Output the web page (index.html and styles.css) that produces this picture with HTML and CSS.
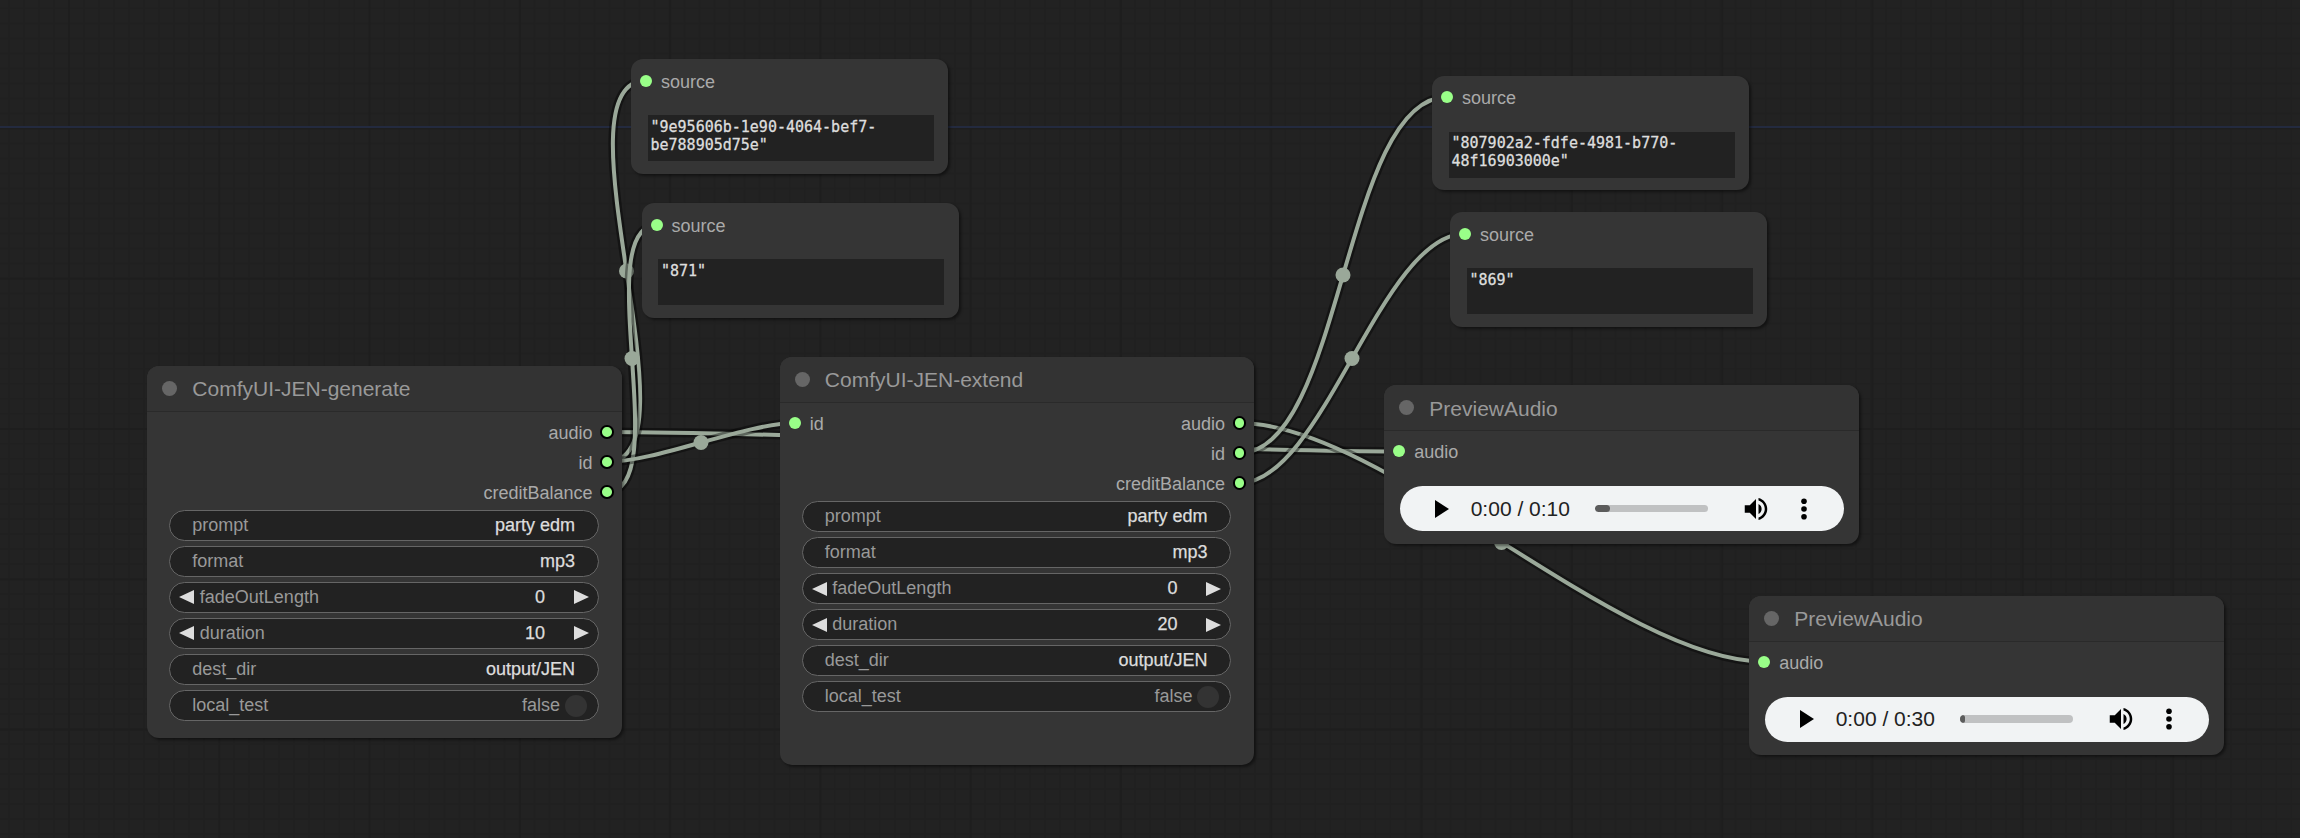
FILE: index.html
```
<!DOCTYPE html>
<html lang="en">
<head>
<meta charset="utf-8">
<title>ComfyUI</title>
<link rel="stylesheet" href="styles.css">
</head>
<body>
<main class="canvas">
  <svg class="links" width="2300" height="838" viewBox="0 0 2300 838">
    <defs>
      <g id="volume"><path d="M3 9v6h4l5 5V4L7 9H3zm13.5 3A4.5 4.5 0 0 0 14 7.97v8.05c1.48-.73 2.5-2.25 2.5-4.02zM14 3.23v2.06c2.89.86 5 3.54 5 6.71s-2.11 5.85-5 6.71v2.06c4.01-.91 7-4.49 7-8.77s-2.99-7.86-7-8.77z"/></g>
    </defs>
    <g class="link"><path d="M607 432C805 432 1201 451.500 1399 451.500"/><path d="M607 432C805 432 1201 451.500 1399 451.500"/><circle cx="1003" cy="442" r="7.500"/></g>
    <g class="link"><path d="M607 462C703 462 550 80.500 646 80.500"/><path d="M607 462C703 462 550 80.500 646 80.500"/><circle cx="626.500" cy="271" r="7.500"/></g>
    <g class="link"><path d="M607 492C675 492 589 225 657 225"/><path d="M607 492C675 492 589 225 657 225"/><circle cx="632" cy="358.500" r="7.500"/></g>
    <g class="link"><path d="M607 462C655 462 747 423 795 423"/><path d="M607 462C655 462 747 423 795 423"/><circle cx="701" cy="442.500" r="7.500"/></g>
    <g class="link"><path d="M1239.500 423C1384 423 1619 661.500 1764 661.500"/><path d="M1239.500 423C1384 423 1619 661.500 1764 661.500"/><circle cx="1501.500" cy="542.500" r="7.500"/></g>
    <g class="link"><path d="M1239.500 453C1343 453 1343 97 1447 97"/><path d="M1239.500 453C1343 453 1343 97 1447 97"/><circle cx="1343" cy="275" r="7.500"/></g>
    <g class="link"><path d="M1239.500 483C1323 483 1381 233.700 1465 233.700"/><path d="M1239.500 483C1323 483 1381 233.700 1465 233.700"/><circle cx="1352" cy="358.500" r="7.500"/></g>
  </svg>

  <section class="node compact" style="left:631px;top:59px">
    <div class="slot in"><i class="port"></i>source</div>
    <div class="value">"9e95606b-1e90-4064-bef7-<br>be788905d75e"</div>
  </section>
  <section class="node compact" style="left:641.500px;top:203.300px">
    <div class="slot in"><i class="port"></i>source</div>
    <div class="value">"871"</div>
  </section>
  <section class="node compact" style="left:1432px;top:75.500px">
    <div class="slot in"><i class="port"></i>source</div>
    <div class="value">"807902a2-fdfe-4981-b770-<br>48f16903000e"</div>
  </section>
  <section class="node compact" style="left:1450px;top:212.300px">
    <div class="slot in"><i class="port"></i>source</div>
    <div class="value">"869"</div>
  </section>

  <section class="node wide" style="left:147.300px;top:365.700px;height:372.300px">
    <header class="title"><i class="dot"></i><span>ComfyUI-JEN-generate</span></header>
    <div class="slots">
      <div></div>
      <div class="outs">
        <div class="slot out">audio<i class="port"></i></div>
        <div class="slot out">id<i class="port"></i></div>
        <div class="slot out">creditBalance<i class="port"></i></div>
      </div>
    </div>
    <div class="widgets">
      <div class="widget"><span>prompt</span><b>party edm</b></div>
      <div class="widget"><span>format</span><b>mp3</b></div>
      <div class="widget num"><i class="arrow prev"></i><span>fadeOutLength</span><b>0</b><i class="arrow next"></i></div>
      <div class="widget num"><i class="arrow prev"></i><span>duration</span><b>10</b><i class="arrow next"></i></div>
      <div class="widget"><span>dest_dir</span><b>output/JEN</b></div>
      <div class="widget toggle"><span>local_test</span><span class="state">false</span><i class="knob"></i></div>
    </div>
  </section>

  <section class="node wide" style="left:779.800px;top:356.800px;height:408.500px">
    <header class="title"><i class="dot"></i><span>ComfyUI-JEN-extend</span></header>
    <div class="slots">
      <div class="slot in"><i class="port"></i>id</div>
      <div class="outs">
        <div class="slot out">audio<i class="port"></i></div>
        <div class="slot out">id<i class="port"></i></div>
        <div class="slot out">creditBalance<i class="port"></i></div>
      </div>
    </div>
    <div class="widgets">
      <div class="widget"><span>prompt</span><b>party edm</b></div>
      <div class="widget"><span>format</span><b>mp3</b></div>
      <div class="widget num"><i class="arrow prev"></i><span>fadeOutLength</span><b>0</b><i class="arrow next"></i></div>
      <div class="widget num"><i class="arrow prev"></i><span>duration</span><b>20</b><i class="arrow next"></i></div>
      <div class="widget"><span>dest_dir</span><b>output/JEN</b></div>
      <div class="widget toggle"><span>local_test</span><span class="state">false</span><i class="knob"></i></div>
    </div>
  </section>

  <section class="node wide preview" style="left:1384.300px;top:385.200px">
    <header class="title"><i class="dot"></i><span>PreviewAudio</span></header>
    <div class="slot in"><i class="port"></i>audio</div>
    <div class="player">
      <svg class="play" width="14" height="18" viewBox="0 0 14 18"><path d="M0 0v18l14-9z"/></svg>
      <span class="time">0:00 / 0:10</span>
      <div class="track"><div class="buffered" style="width:15px"></div></div>
      <svg class="vol" width="30" height="30" viewBox="0 0 24 24"><use href="#volume"/></svg>
      <svg class="more" width="6" height="22" viewBox="0 0 6 22"><circle cx="3" cy="3.300" r="2.800"/><circle cx="3" cy="11" r="2.800"/><circle cx="3" cy="18.700" r="2.800"/></svg>
    </div>
  </section>

  <section class="node wide preview" style="left:1749.300px;top:595.500px">
    <header class="title"><i class="dot"></i><span>PreviewAudio</span></header>
    <div class="slot in"><i class="port"></i>audio</div>
    <div class="player">
      <svg class="play" width="14" height="18" viewBox="0 0 14 18"><path d="M0 0v18l14-9z"/></svg>
      <span class="time">0:00 / 0:30</span>
      <div class="track"><div class="buffered" style="width:5px"></div></div>
      <svg class="vol" width="30" height="30" viewBox="0 0 24 24"><use href="#volume"/></svg>
      <svg class="more" width="6" height="22" viewBox="0 0 6 22"><circle cx="3" cy="3.300" r="2.800"/><circle cx="3" cy="11" r="2.800"/><circle cx="3" cy="18.700" r="2.800"/></svg>
    </div>
  </section>
</main>
</body>
</html>
```
FILE: styles.css
```
* { box-sizing: border-box; }
body { margin: 0; background: #222; font-family: "Liberation Sans", Arial, sans-serif; }

.canvas {
  position: relative;
  width: 2300px;
  height: 838px;
  overflow: hidden;
  background-color: #222;
  background-image:
    linear-gradient(#232a3f, #232a3f),
    linear-gradient(90deg, #1e1e1e 2px, transparent 2px),
    linear-gradient(#1e1e1e 2px, transparent 2px),
    linear-gradient(90deg, #202020 1.500px, transparent 1.500px),
    linear-gradient(#202020 1.500px, transparent 1.500px);
  background-repeat: no-repeat, repeat, repeat, repeat, repeat;
  background-size: 100% 2px, 150.300px 100%, 100% 150.300px, 15.030px 100%, 100% 15.030px;
  background-position: 0 126px, 68px 0, 0 127.500px, 68px 0, 0 127.500px;
}

.links { position: absolute; left: 0; top: 0; }
.link path { fill: none; stroke: #9aa899; stroke-width: 4; }
.link path:first-child { stroke: rgba(0, 0, 0, .4); stroke-width: 9; }
.link circle { fill: #9aa899; }

.node {
  position: absolute;
  display: flex;
  flex-direction: column;
  border-radius: 12px;
  background: #353535;
  box-shadow: 2px 2px 3px rgba(0, 0, 0, .45);
  color: #aaa;
}
.wide { width: 474.700px; }

.title {
  display: flex;
  align-items: center;
  gap: 15px;
  flex: none;
  height: 46px;
  padding-left: 15px;
  border-bottom: 1.500px solid #2a2a2a;
  border-radius: 12px 12px 0 0;
  background: #333;
  color: #999;
  font-size: 21px;
}
.title span { padding-top: 2px; }
.dot { width: 15px; height: 15px; border-radius: 50%; background: #666; }

.slots { display: flex; justify-content: space-between; padding-top: 6px; }
.slot { display: flex; align-items: center; height: 30.060px; font-size: 18px; line-height: 32px; }
.slot.in { gap: 9px; padding-left: 9px; }
.slot.out { gap: 8px; padding-right: 8px; justify-content: flex-end; }
.port { flex: none; width: 12px; height: 12px; margin-top: -1.500px; border-radius: 50%; background: #9f8; }
.out .port { width: 13.500px; height: 13.500px; border: 2px solid #000; }

.widgets { display: flex; flex-direction: column; gap: 5px; padding: 2px 23px 0 22px; }
.widget {
  display: flex;
  align-items: center;
  height: 31.060px;
  padding: 0 22px;
  border: 1.500px solid #666;
  border-radius: 16px;
  background: #222;
  color: #999;
  font-size: 18px;
}
.widget b { margin-left: auto; padding-right: 1px; color: #ddd; font-weight: 400; -webkit-text-stroke: .25px #ddd; }
.num { padding: 0 9px; }
.num span { margin-left: 5.500px; }
.arrow { width: 0; height: 0; border: 7.500px solid transparent; }
.prev { border-left: 0; border-right: 15px solid #ddd; }
.next { margin-left: 28px; border-right: 0; border-left: 15px solid #ddd; }
.toggle { padding-right: 11px; }
.state { margin-left: auto; }
.knob { width: 22px; height: 22px; margin-left: 5px; border-radius: 50%; background: #333; }

.compact { width: 317px; height: 114.500px; padding-top: 7.500px; }
.compact .value {
  width: 286px;
  height: 46px;
  margin: 18.500px 0 0 16.500px;
  padding: 2.500px 3px;
  background: #222;
  color: #ddd;
  font: 15px/18px "DejaVu Sans Mono", monospace;
  white-space: nowrap;
  -webkit-text-stroke: .3px #ddd;
}

.preview { height: 159.300px; }
.preview .slot { margin-top: 6px; }
.player {
  display: flex;
  align-items: center;
  width: 443.600px;
  height: 45px;
  margin: 19px 0 0 15.900px;
  padding-left: 34.500px;
  border-radius: 22.500px;
  background: #f1f3f4;
  color: #222;
}
.player svg { flex: none; }
.time { width: 100px; margin-left: 22px; font-size: 21px; white-space: nowrap; }
.track { width: 113.500px; height: 7.500px; margin-left: 24px; overflow: hidden; border-radius: 4px; background: #c0c1c2; }
.buffered { height: 100%; border-radius: 4px; background: #5c5c5c; }
.vol { margin-left: 33px; }
.more { margin-left: 30px; }
```
